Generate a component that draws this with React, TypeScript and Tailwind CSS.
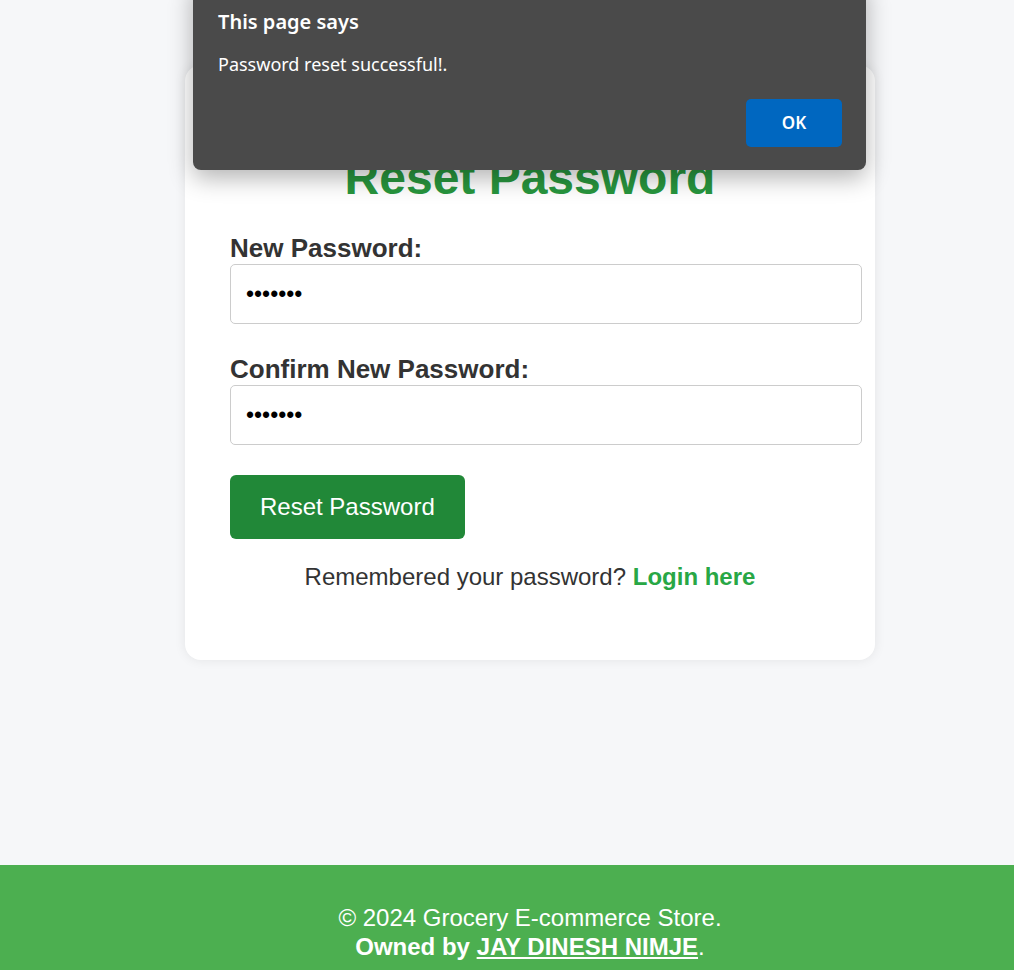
import React from "react";

const ResetPassword = () => {
  return (
    <div className="min-h-[970px] flex flex-col bg-[#f6f7f9] font-['Liberation_Sans',Arial,sans-serif] relative">
      <main className="h-[865px] flex justify-center">
        <section className="mt-[65px] ml-[46px] w-[690px] h-[595px] bg-white rounded-2xl shadow-[0_0_12px_rgba(0,0,0,0.08)] px-[45px] pt-[85px]">
          <h2 className="text-center text-[48px] leading-[55px] font-bold text-[#28963e]">
            Reset Password
          </h2>
          <form className="mt-[28px] flex flex-col" onSubmit={(e) => e.preventDefault()}>
            <label htmlFor="newPassword" className="text-[26px] leading-[30px] font-bold text-[#333]">
              New Password:
            </label>
            <input
              id="newPassword"
              type="password"
              readOnly
              defaultValue="1234567"
              className="mt-px w-full box-content h-[58px] px-[15px] border border-[#ccc] rounded-[5px] text-[23px] text-black bg-white outline-none"
            />
            <label htmlFor="confirmPassword" className="mt-[30px] text-[26px] leading-[30px] font-bold text-[#333]">
              Confirm New Password:
            </label>
            <input
              id="confirmPassword"
              type="password"
              readOnly
              defaultValue="1234567"
              className="mt-px w-full box-content h-[58px] px-[15px] border border-[#ccc] rounded-[5px] text-[23px] text-black bg-white outline-none"
            />
            <div className="mt-[30px]">
              <button
                type="submit"
                className="h-[64px] px-[30px] rounded-[6px] bg-[#218838] text-white text-[24px]"
              >
                Reset Password
              </button>
            </div>
          </form>
          <p className="mt-[24px] text-center text-[24px] leading-[28px] text-[#333]">
            Remembered your password?{" "}
            <a href="#" className="font-bold text-[#28a745]">
              Login here
            </a>
          </p>
        </section>
      </main>
      <footer className="flex-1 bg-[#4caf50] text-white text-center text-[24px] leading-[29px] pt-[38px] pl-[46px]">
        <p>© 2024 Grocery E-commerce Store.</p>
        <p>
          <span className="font-bold">
            Owned by <a href="#" className="underline">JAY DINESH NIMJE</a>
          </span>
          .
        </p>
      </footer>

      {/* browser alert */}
      <div className="absolute left-[193px] top-[-20px] w-[673px] h-[190px] bg-[#4a4a4a] rounded-lg shadow-[0_8px_24px_rgba(0,0,0,0.3)] font-['Noto_Sans','Open_Sans',sans-serif] text-white">
        <div className="pl-[25px] pt-[29px]">
          <div className="text-[20px] leading-[26px] font-semibold">This page says</div>
          <div className="mt-[17px] text-[18px] leading-[24px]">Password reset successful!.</div>
        </div>
        <div className="flex justify-end pr-[24px] mt-[23px]">
          <button className="w-[96px] h-[48px] rounded-[5px] bg-[#0067c0] text-[17px] font-semibold text-white">
            OK
          </button>
        </div>
      </div>
    </div>
  );
};

export default function App() {
  return <ResetPassword />;
}
